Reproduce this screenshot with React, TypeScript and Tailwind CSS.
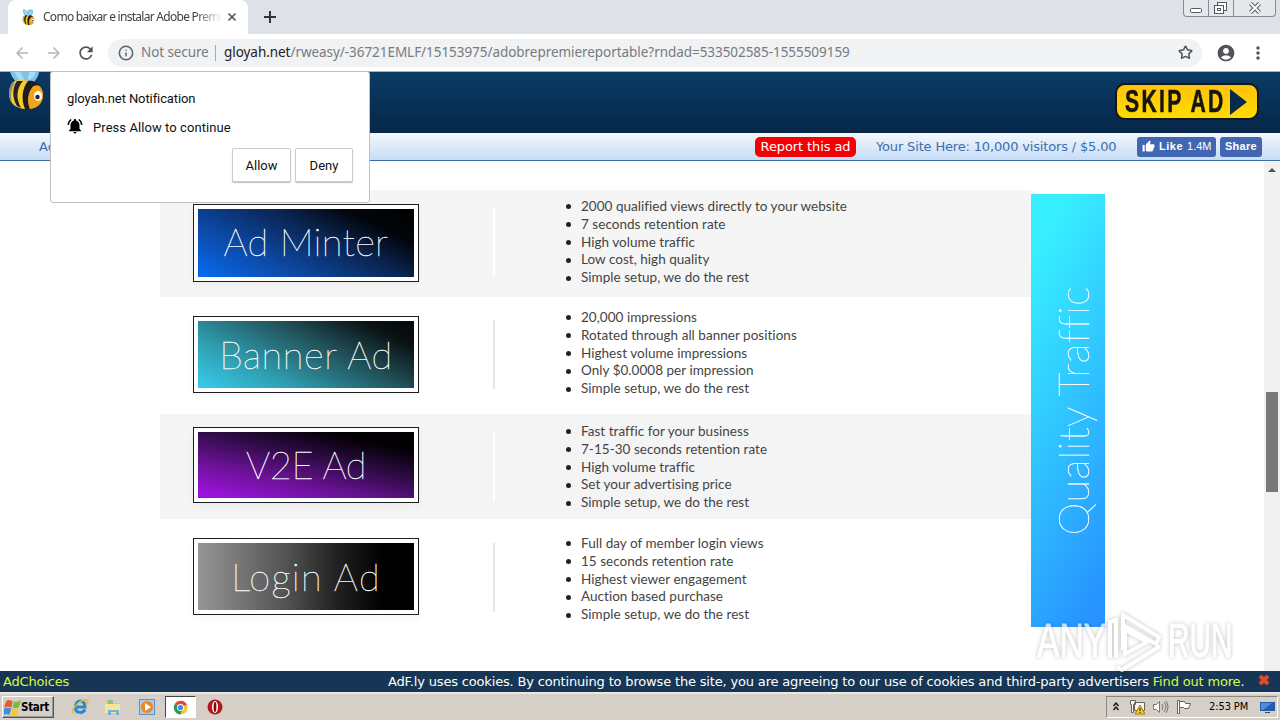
import type { ReactNode } from "react";
import { Info, Star, X } from "lucide-react";
import { MdAccountCircle, MdArrowBack, MdArrowForward, MdMoreVert, MdNotificationsActive, MdRefresh, MdThumbUp } from "react-icons/md";

type Ad = {
  name: string;
  row: string;
  box: string;
  fill: string;
  label: string;
  line: string;
  list: string;
  items: string[];
};

const ads: Ad[] = [
  {
    name: "Ad Minter",
    row: "h-[107px] bg-[#f5f5f5]",
    box: "mt-[14px] h-[78px]",
    fill: "bg-[linear-gradient(27deg,#0868ea_3%,#0d469f_32%,#0a2450_60%,#02060d_80%,#000)]",
    label: "pb-[3px] tracking-[0.3px]",
    line: "mt-[18px] h-[68px] bg-white",
    list: "pt-[8px]",
    items: [
      "2000 qualified views directly to your website",
      "7 seconds retention rate",
      "High volume traffic",
      "Low cost, high quality",
      "Simple setup, we do the rest",
    ],
  },
  {
    name: "Banner Ad",
    row: "h-[117px]",
    box: "mt-[19px] h-[77px]",
    fill: "bg-[linear-gradient(27deg,#35c8e8_3%,#2f9dae_28%,#21525b_60%,#0a1214_85%,#05080a)]",
    label: "pb-[1px] tracking-[0.6px]",
    line: "mt-[23px] h-[69px] bg-[#e6e6e6]",
    list: "pt-[12px]",
    items: [
      "20,000 impressions",
      "Rotated through all banner positions",
      "Highest volume impressions",
      "Only $0.0008 per impression",
      "Simple setup, we do the rest",
    ],
  },
  {
    name: "V2E Ad",
    row: "h-[105px] bg-[#f4f4f4]",
    box: "mt-[13px] h-[76px]",
    fill: "bg-[linear-gradient(13deg,#9c12dc_5%,#6b1296_32%,#2c0b42_60%,#030004_83%)]",
    label: "pb-[1px] tracking-[-0.4px]",
    line: "mt-[18px] h-[70px] bg-white",
    list: "pt-[9px]",
    items: [
      "Fast traffic for your business",
      "7-15-30 seconds retention rate",
      "High volume traffic",
      "Set your advertising price",
      "Simple setup, we do the rest",
    ],
  },
  {
    name: "Login Ad",
    row: "h-[120px]",
    box: "mt-[19px] h-[77px]",
    fill: "bg-[linear-gradient(90deg,#969696,#545454_40%,#202020_65%,#000_86%)]",
    label: "pb-[1px] tracking-[1.3px]",
    line: "mt-[24px] h-[69px] bg-[#e6e6e6]",
    list: "pt-[16px]",
    items: [
      "Full day of member login views",
      "15 seconds retention rate",
      "Highest viewer engagement",
      "Auction based purchase",
      "Simple setup, we do the rest",
    ],
  },
];

function Bee({ className }: { className: string }) {
  return (
    <svg viewBox="0 0 36 46" className={className}>
      <path d="M13 23C4 17 0 7 2 2c3-4 9 0 12 5C17 1 26-2 30 3c3 5 0 13-6 18z" fill="#7dc3e6" />
      <path d="M12 18C8 13 5 7 6 4c4 1 8 7 10 13zM20 16c0-6 3-11 7-11 2 5-1 10-6 12z" fill="#a9daf0" />
      <path d="M4 20c-4 6-4 15 0 20 3 4 9 6 15 6 9 0 16-5 16-14 0-8-7-14-15-14-6-1-12-2-16 2z" fill="#f3cf2c" />
      <path d="M4 20c-4 6-4 15 0 20-2-7-1-14 3-21z" fill="#8d8a80" />
      <path d="M9 18c-5 7-5 17 0 25l4 2c-5-9-5-19 2-27z" fill="#2b2126" />
      <path d="M20 18c-6 7-7 19-3 28h5c-3-8-2-15 2-21 3-3 6-3 9-1-3-4-8-7-13-6z" fill="#241a20" />
      <path d="M24 25c-4 5-5 13-2 21 8-1 13-7 13-14 0-3-1-6-3-8-3-2-6-2-8 1z" fill="#f0a41d" />
      <ellipse cx="30" cy="33" rx="4" ry="5" fill="#fff" />
      <circle cx="29.500" cy="34" r="2.200" fill="#2a1733" />
    </svg>
  );
}

function TabStrip() {
  return (
    <div className="flex h-[34px] shrink-0 items-stretch bg-[#dee1e6]">
      <div className="ml-2 flex w-[240px] items-center rounded-t-lg bg-white pl-[14px]">
        <Bee className="h-4 w-[13px]" />
        <div className="ml-[8px] w-[179px] whitespace-nowrap font-['Noto_Sans','Open_Sans',sans-serif] text-[12px] tracking-[-0.72px] text-[#3c4043] [mask-image:linear-gradient(90deg,#000_85%,transparent)]">
          Como baixar e instalar Adobe Premie
        </div>
        <X className="ml-[4px] size-[12px] text-[#55595d]" strokeWidth={3.4} />
      </div>
      <svg viewBox="0 0 12 12" className="ml-[16px] mt-[11px] size-3">
        <path d="M6 0v12M0 6h12" stroke="#303438" strokeWidth="2" />
      </svg>
      <div className="ml-auto mr-[4px] flex h-[17px] w-[93px] rounded-b-[4px] border border-t-0 border-[#868b95] bg-[#e5e7eb]">
        <svg viewBox="0 0 91 16" className="h-4 w-[91px]" fill="none" stroke="#515966">
          <rect x="6.5" y="8.500" width="11" height="4" rx="1" fill="#fff" />
          <path d="M24.500 0v16M49.500 0v16" stroke="#868b95" />
          <rect x="33.500" y="2.500" width="9" height="8" fill="#fff" />
          <rect x="30.500" y="5.500" width="9" height="8" fill="#fff" />
          <rect x="33.500" y="8.500" width="3" height="2" />
          <path d="m66.500 3.500 9 9m0-9-9 9" strokeWidth="4" />
          <path d="m66.500 3.500 9 9m0-9-9 9" stroke="#fff" strokeWidth="2" />
        </svg>
      </div>
    </div>
  );
}

function Toolbar() {
  return (
    <div className="flex h-[38px] shrink-0 items-center border-b border-[#a9b1b5] bg-white pl-[13px]">
      <MdArrowBack className="size-[18px] text-[#b4b6b9]" />
      <MdArrowForward className="ml-[14px] size-[18px] text-[#b4b6b9]" />
      <MdRefresh className="ml-[13px] size-[20px] text-[#505458]" />
      <div className="ml-[12px] flex h-[28px] w-[1094px] items-center rounded-full bg-[#f0f2f4] pl-[10px] font-['Noto_Sans',sans-serif] text-[13.500px] whitespace-nowrap text-[#777b80]">
        <Info className="size-4 text-[#5f6368]" strokeWidth={2.3} />
        <span className="ml-[7px] w-[67px] tracking-[-0.1px]">Not secure</span>
        <span className="ml-[7px] h-4 w-px bg-[#a6a9ad]" />
        <div className="ml-[8px] w-[626px] tracking-[-0.05px]">
          <span className="text-[#202124]">gloyah.net</span>
          <span>/rweasy/-36721EMLF/15153975/adobrepremiereportable?rndad=533502585-1555509159</span>
        </div>
        <Star className="ml-auto mr-[9px] size-[15px] text-[#505458]" strokeWidth={2.4} />
      </div>
      <MdAccountCircle className="ml-[14px] size-5 text-[#505458]" />
      <MdMoreVert className="ml-[12px] size-5 text-[#505458]" />
    </div>
  );
}

function SiteHeader() {
  return (
    <>
      <div className="flex h-[61px] shrink-0 justify-between overflow-hidden bg-linear-to-b from-[#0b3b66] to-[#062748]">
        <Bee className="-mt-[9px] ml-[8px] h-[46px] w-[36px]" />
        <div className="mr-[21px] mt-[11px] flex h-[37px] w-[144px] items-center rounded-[10px] border-2 border-[#14171a] bg-linear-to-b from-[#ffc20c] to-[#ffdc00] pl-[8px]">
          <span className="w-[101px] whitespace-nowrap">
            <span className="inline-block origin-left scale-x-[0.66] font-['Liberation_Sans',sans-serif] text-[32px] leading-none font-bold tracking-[3.5px] text-[#151513] [-webkit-text-stroke:0.6px_#151513]">
              SKIP AD
            </span>
          </span>
          <svg viewBox="0 0 17 26" className="ml-[4px] h-[26px] w-[17px]">
            <path d="M0 0v26l17-13z" fill="#082b4c" />
          </svg>
        </div>
      </div>
      <div className="flex h-[28px] shrink-0 items-center border-b border-[#3a6ba8] bg-linear-to-b from-[#f3f8fd] to-[#c6dcf6] pl-[39px] font-['DejaVu_Sans',sans-serif] text-[13px] whitespace-nowrap text-[#3a6fae]">
        <span className="w-[716px] pt-px">Advertising</span>
        <span className="flex h-[20px] w-[101px] items-center justify-center rounded-[5px] bg-[#f60006] pt-px tracking-[-0.1px] text-white">Report this ad</span>
        <span className="ml-[20px] w-[241px] pt-px tracking-[-0.16px]">Your Site Here: 10,000 visitors / $5.00</span>
        <span className="ml-[20px] flex h-[20px] w-[79px] items-center rounded-[3px] bg-[#4267b2] pl-[5px] font-['Liberation_Sans',sans-serif] text-[11px] text-white">
          <MdThumbUp className="size-[13px]" />
          <b className="ml-[4px] tracking-[0.5px]">Like</b>
          <span className="ml-[4px]">1.4M</span>
        </span>
        <span className="ml-[4px] flex h-[20px] w-[42px] items-center justify-center rounded-[3px] bg-[#4267b2] font-['Liberation_Sans',sans-serif] text-[11px] font-bold tracking-[0.3px] text-white">
          Share
        </span>
      </div>
    </>
  );
}

function AdRow({ ad }: { ad: Ad }) {
  return (
    <div className={`flex w-[871px] items-start ${ad.row}`}>
      <div className={`ml-[33px] w-[226px] border border-[#1b1d22] bg-white p-[4px] shadow-[0_3px_6px_rgba(0,0,0,0.04)] ${ad.box}`}>
        <div className={`flex h-full items-center justify-center ${ad.fill}`}>
          <span className={`font-['Lato',sans-serif] text-[38px] font-thin whitespace-nowrap text-white [-webkit-text-stroke:0.35px_white] ${ad.label}`}>
            {ad.name}
          </span>
        </div>
      </div>
      <div className={`ml-[74px] w-[2px] ${ad.line}`} />
      <ul className={`ml-[71px] font-['Lato',sans-serif] text-[13.500px] leading-[17.8px] tracking-[0.03px] whitespace-nowrap text-[#444] ${ad.list}`}>
        {ad.items.map((item) => (
          <li key={item} className="flex items-center">
            <span className="mr-[10px] size-[5px] rounded-full bg-[#222]" />
            {item}
          </li>
        ))}
      </ul>
    </div>
  );
}

function PageContent() {
  return (
    <div className="flex h-[510px] shrink-0 bg-white">
      <div className="ml-[160px] pt-[29px]">
        {ads.map((ad) => (
          <AdRow key={ad.name} ad={ad} />
        ))}
      </div>
      <div className="mt-[33px] flex h-[433px] w-[74px] items-center justify-center bg-[linear-gradient(120deg,#37efff_12%,#30c4ff_50%,#2794ff_92%)]">
        <span className="rotate-180 pr-[10px] font-['Lato',sans-serif] text-[42px] leading-[42px] font-thin tracking-[0.3px] whitespace-nowrap text-white [-webkit-text-stroke:0.35px_white] [writing-mode:vertical-rl]">
          Quality Traffic
        </span>
      </div>
      <div className="ml-auto flex w-4 flex-col items-center bg-[#f1f1f1]">
        <svg viewBox="0 0 8 4" className="mt-[7px] h-1 w-2">
          <path d="M0 4h8L4 0z" fill="#505050" />
        </svg>
        <div className="mt-[220px] h-[100px] w-3 bg-[#787878]" />
      </div>
    </div>
  );
}

function PopupButton({ children, width }: { children: ReactNode; width: string }) {
  return (
    <button className={`h-[34px] rounded-[2px] border border-[#ccc] bg-white pt-[2px] shadow-[0_1px_1px_rgba(0,0,0,0.25)] ${width}`}>
      {children}
    </button>
  );
}

function NotificationPopup() {
  return (
    <div className="absolute top-[71px] left-[50px] h-[132px] w-[320px] rounded-[3px] border border-[#c0c0c0] bg-white pl-[16px] font-['Roboto',sans-serif] text-[13px] whitespace-nowrap text-[#111]">
      <div className="mt-[18px] leading-[18px] tracking-[-0.1px]">gloyah.net Notification</div>
      <div className="mt-[9px] flex h-5 items-center">
        <MdNotificationsActive className="-mt-[3px] -ml-px size-[18px] text-black" />
        <span className="ml-[9px] pt-[2px] tracking-[0.07px]">Press Allow to continue</span>
      </div>
      <div className="mt-[11px] ml-[165px] flex gap-[4px]">
        <PopupButton width="w-[59px]">Allow</PopupButton>
        <PopupButton width="w-[58px]">Deny</PopupButton>
      </div>
    </div>
  );
}

function Watermark() {
  return (
    <div className="absolute top-[609px] left-[1037px] flex w-[198px] items-center opacity-70 drop-shadow-[0_0_2px_rgba(0,0,0,0.35)]">
      <span className="w-[68px]">
        <span className="inline-block origin-left scale-x-[0.7] font-['Liberation_Sans',sans-serif] text-[48px] leading-[64px] text-white [-webkit-text-stroke:1px_white]">
          ANY
        </span>
      </span>
      <svg viewBox="0 0 58 62" className="h-[62px] w-[58px] shrink-0" fill="none" stroke="#fff" strokeWidth="4">
        <path d="M5 48V12l6-2v38M18 40V5l36 22-3 7-33-19M12 57l5 3 38-24M20 20v24l22-12z" />
      </svg>
      <span className="ml-[5px] w-[65px]">
        <span className="inline-block origin-left scale-x-[0.62] font-['Liberation_Sans',sans-serif] text-[48px] leading-[64px] text-white [-webkit-text-stroke:1px_white]">
          RUN
        </span>
      </span>
    </div>
  );
}

function CookieBar() {
  return (
    <div className="flex h-[21px] shrink-0 items-center bg-[#173655] pl-[3px] font-['DejaVu_Sans',sans-serif] text-[13px] tracking-[-0.168px] whitespace-nowrap text-white">
      <span className="w-[385px] text-[#d8fb3c]">AdChoices</span>
      <span className="w-[856px]">
        AdF.ly uses cookies. By continuing to browse the site, you are agreeing to our use of cookies and third-party advertisers{" "}
        <span className="text-[#d8fb3c]">Find out more</span>.
      </span>
      <svg viewBox="0 0 12 12" className="-mt-[3px] ml-[14px] size-3">
        <path d="m2 2 8 8m0-8-8 8" stroke="#e0492c" strokeWidth="4" />
      </svg>
    </div>
  );
}

function Taskbar() {
  return (
    <div className="flex h-[28px] shrink-0 items-center border-t-2 border-[#ebe8e3] bg-[#d5cfc8] pl-[2px] font-['DejaVu_Sans_Condensed','DejaVu_Sans',sans-serif] text-[12px] text-black">
      <div className="flex h-[22px] w-[52px] items-center border border-t-white border-r-[#555] border-b-[#555] border-l-white pl-[1px] shadow-[inset_-1px_-1px_#999]">
        <svg viewBox="0 0 16 16" className="size-[17px]">
          <path d="M2 2c2-2 4-1 6 0L7 8C5 7 3 7 0 8z" fill="#e85b24" />
          <path d="M9 2c2 1 4 1 7-1l-2 7c-2 1-4 1-6 0z" fill="#7dbb42" />
          <path d="M0 9c2-1 5-1 7 0l-2 6c-1-1-4-1-6 0z" fill="#3f8fd8" />
          <path d="M8 9c2 1 4 1 6 0l-2 6c-2 1-4 1-6 0z" fill="#f8c72c" />
        </svg>
        <span className="pt-px text-[11.500px] font-bold tracking-[-0.3px]">Start</span>
      </div>
      <svg viewBox="0 0 18 18" className="ml-[17px] size-[18px]" fill="none">
        <path d="M14 11.500c-2 4-9 4-9.500-1-.5-5 2-7.500 5-7.500 3 .5 4.500 3 4.500 6H6" stroke="#258bd5" strokeWidth="3" />
        <path d="M2 15.500C-1 13 7 3 15 1.500c3 0 2 3 0 5" stroke="#efb82c" strokeWidth="1.500" />
      </svg>
      <svg viewBox="0 0 18 18" className="ml-[15px] size-[18px]">
        <path d="M2 3h6l1 2h7v11H2z" fill="#e5c765" />
        <path d="M4 2h5v5H4z" fill="#8fc08a" />
        <path d="M1 6h15v9H1z" fill="#f7e59a" />
        <path d="M4 17v-5h11v5h-3v-3H7v3z" fill="#72b5dc" />
      </svg>
      <svg viewBox="0 0 16 16" className="ml-[17px] size-4">
        <rect x=".5" y=".5" width="15" height="15" fill="#a9cae8" stroke="#5b96ca" />
        <circle cx="8" cy="8" r="6" fill="#ee861c" />
        <path d="m6 4 6 4-6 4z" fill="#fff" />
      </svg>
      <div className="ml-[10px] flex h-[22px] w-[31px] items-center justify-center border border-t-[#444] border-r-white border-b-white border-l-[#444] bg-white">
        <svg viewBox="0 0 16 16" className="size-[15px]">
          <path d="M8 8 2 4A7.500 7.500 0 0 1 15 5z" fill="#dc4939" />
          <path d="M15 5a7.500 7.500 0 0 1-7 10.500L8 8z" fill="#f6cb30" />
          <path d="M2 4a7.500 7.500 0 0 0 6 11.500L10 9z" fill="#279b57" />
          <circle cx="8" cy="8" r="3.700" fill="#fff" />
          <circle cx="8" cy="8" r="2.800" fill="#4789e8" />
        </svg>
      </div>
      <svg viewBox="0 0 16 16" className="ml-[11px] size-4">
        <circle cx="8" cy="8" r="7.500" fill="#b3161b" />
        <ellipse cx="8" cy="8" rx="3" ry="6" fill="#fff" />
        <ellipse cx="8" cy="8" rx="1.400" ry="5" fill="#7e0b0f" />
      </svg>
      <div className="ml-auto mr-[2px] flex h-[22px] w-[172px] items-center border border-t-[#8b8782] border-r-white border-b-white border-l-[#8b8782] pl-[6px]">
        <svg viewBox="0 0 6 9" className="mb-[2px] h-[9px] w-[6px]" fill="none" stroke="#111" strokeWidth="1.400">
          <path d="m.5 4 2.500-3 2.500 3M.5 8 3 5l2.500 3" />
        </svg>
        <svg viewBox="0 0 16 16" className="ml-[10px] size-4" fill="#f6f6f4" stroke="#65615d">
          <path d="M5.500 3.500h10v8h-10zM1.500 1.500h5v4h-2v8h-2v-8h-1z" />
          <path d="m11 6 5 9H6z" fill="#f5c91e" stroke="#a8800b" />
          <path d="M11 9v3M11 13v1" stroke="#111" />
        </svg>
        <svg viewBox="0 0 17 16" className="ml-[7px] h-4 w-[17px]" fill="none" stroke="#77736e">
          <path d="M1.500 5.500h3l3-3v11l-3-3h-3z" fill="#fff" />
          <path d="M10 5q2 3 0 6m2-8q4 5 0 10m2-11q4 6 0 12" />
        </svg>
        <svg viewBox="0 0 16 16" className="ml-[6px] size-4" fill="#fff" stroke="#65615d">
          <path d="M2.500 1.500h2v13h-2z" />
          <path d="M4.500 2.500h5l1 2h5l-2 5h-4l-1-1h-4z" />
        </svg>
        <span className="ml-[18px] w-[42px] pt-px text-[11px] tracking-[-0.1px] whitespace-nowrap">2:53 PM</span>
        <svg viewBox="0 0 15 13" className="ml-[9px] h-[13px] w-[15px]">
          <path d="M0 1h15v9H0z" fill="#235dab" />
          <path d="M1 2h11L3 9H1z" fill="#4b8dd6" />
          <path d="M5 11h5v1H5z" fill="#3a4b5c" />
        </svg>
      </div>
    </div>
  );
}

export default function App() {
  return (
    <div className="relative flex h-[720px] w-[1280px] flex-col overflow-hidden bg-white">
      <TabStrip />
      <Toolbar />
      <SiteHeader />
      <PageContent />
      <CookieBar />
      <Taskbar />
      <NotificationPopup />
      <Watermark />
    </div>
  );
}
